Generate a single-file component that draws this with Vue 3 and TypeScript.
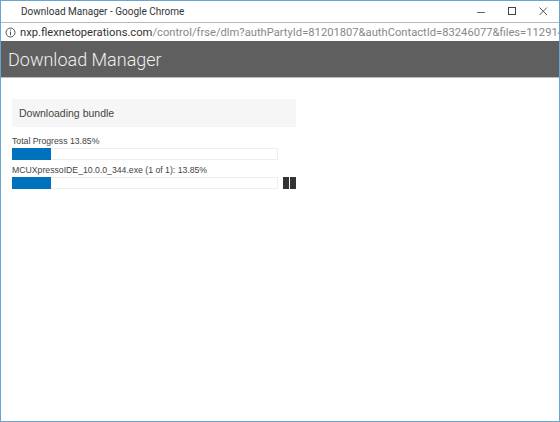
<script setup lang="ts">
const urlHost = 'nxp.flexnetoperations.com'
const urlPath = '/control/frse/dlm?authPartyId=81201807&authContactId=83246077&files=11291447'

const bars = [
  { label: 'Total Progress 13.85%', percent: 13.85, pausable: false },
  { label: 'MCUXpressoIDE_10.0.0_344.exe (1 of 1): 13.85%', percent: 13.85, pausable: true },
]

// filled part is 39px of the 266px track
const fillWidth = (percent: number) => `${(percent / 100) * 266 + 2}px`
</script>

<template>
  <div class="window">
    <div class="titlebar">
      <span class="title">Download Manager - Google Chrome</span>
      <div class="controls">
        <svg width="9" height="9" viewBox="0 0 9 9"><path d="M0 5.5h8" stroke="#666" stroke-width="1" /></svg>
        <svg width="9" height="9" viewBox="0 0 9 9"><rect x="0.5" y="0.5" width="7" height="7" fill="none" stroke="#444" /></svg>
        <svg width="9" height="9" viewBox="0 0 9 9"><path d="M0.5 0.5l7.5 7.5M8 0.5l-7.5 7.5" stroke="#555" stroke-width="1" fill="none" /></svg>
      </div>
    </div>

    <div class="addressbar">
      <svg class="info" width="11" height="11" viewBox="0 0 11 11">
        <circle cx="5.5" cy="5.5" r="4.5" fill="none" stroke="#555" />
        <path d="M5.5 4.6v3.6M5.5 2.6v1.1" stroke="#555" />
      </svg>
      <span class="url"><span class="host">{{ urlHost }}</span>{{ urlPath }}</span>
    </div>

    <header class="header">Download Manager</header>

    <main class="content">
      <div class="status">Downloading bundle</div>
      <div v-for="bar in bars" :key="bar.label" class="item">
        <div class="label">{{ bar.label }}</div>
        <div class="row">
          <div class="track">
            <div class="fill" :style="{ width: fillWidth(bar.percent) }"></div>
          </div>
          <div v-if="bar.pausable" class="pause"><i></i><i></i></div>
        </div>
      </div>
    </main>
  </div>
</template>

<style>
html, body {
  margin: 0;
  background: #fff;
}
</style>

<style scoped>
.window {
  width: 560px;
  height: 422px;
  box-sizing: border-box;
  border: 1px solid #6aa5d2;
  overflow: hidden;
  background: #fff;
  display: flex;
  flex-direction: column;
  font-family: Roboto, "Liberation Sans", sans-serif;
}

.titlebar {
  height: 21px;
  flex: none;
  display: flex;
  align-items: center;
  justify-content: space-between;
  padding: 0 11px 0 20px;
  font-size: 10px;
  color: #333;
}

.controls {
  display: flex;
  gap: 22px;
  align-items: center;
}

.addressbar {
  height: 19px;
  flex: none;
  box-sizing: border-box;
  border-top: 1px solid #b9b9b9;
  display: flex;
  align-items: center;
  padding-left: 4px;
  gap: 4px;
  font-size: 11.2px;
  color: #888;
  white-space: nowrap;
  overflow: hidden;
}

.info {
  flex: none;
}

.host {
  color: #333;
}

.header {
  height: 37px;
  flex: none;
  box-sizing: border-box;
  padding-left: 7px;
  background: #5f5f5f;
  border-bottom: 1px solid #bbb;
  color: #f0f0f0;
  font-size: 18px;
  font-weight: 300;
  line-height: 37px;
}

.content {
  padding: 21px 0 0 11px;
  width: 285px;
  font-family: "Liberation Sans", Arial, sans-serif;
}

.status {
  width: 284px;
  height: 28px;
  line-height: 29px;
  box-sizing: border-box;
  padding-left: 7px;
  margin-bottom: 8px;
  background: #f6f6f6;
  font-size: 10.5px;
  color: #444;
}

.item {
  margin-bottom: 4px;
}

.label {
  font-size: 8.7px;
  line-height: 13px;
  color: #444;
}

.row {
  display: flex;
  align-items: center;
  gap: 5px;
}

.track {
  width: 266px;
  height: 12px;
  box-sizing: border-box;
  border: 1px solid #eee;
  background: #fff;
}

.fill {
  height: 12px;
  margin: -1px;
  background: #0071bc;
}

.pause {
  display: flex;
  gap: 1px;
}

.pause i {
  display: block;
  width: 6px;
  height: 12px;
  background: #333;
}
</style>
